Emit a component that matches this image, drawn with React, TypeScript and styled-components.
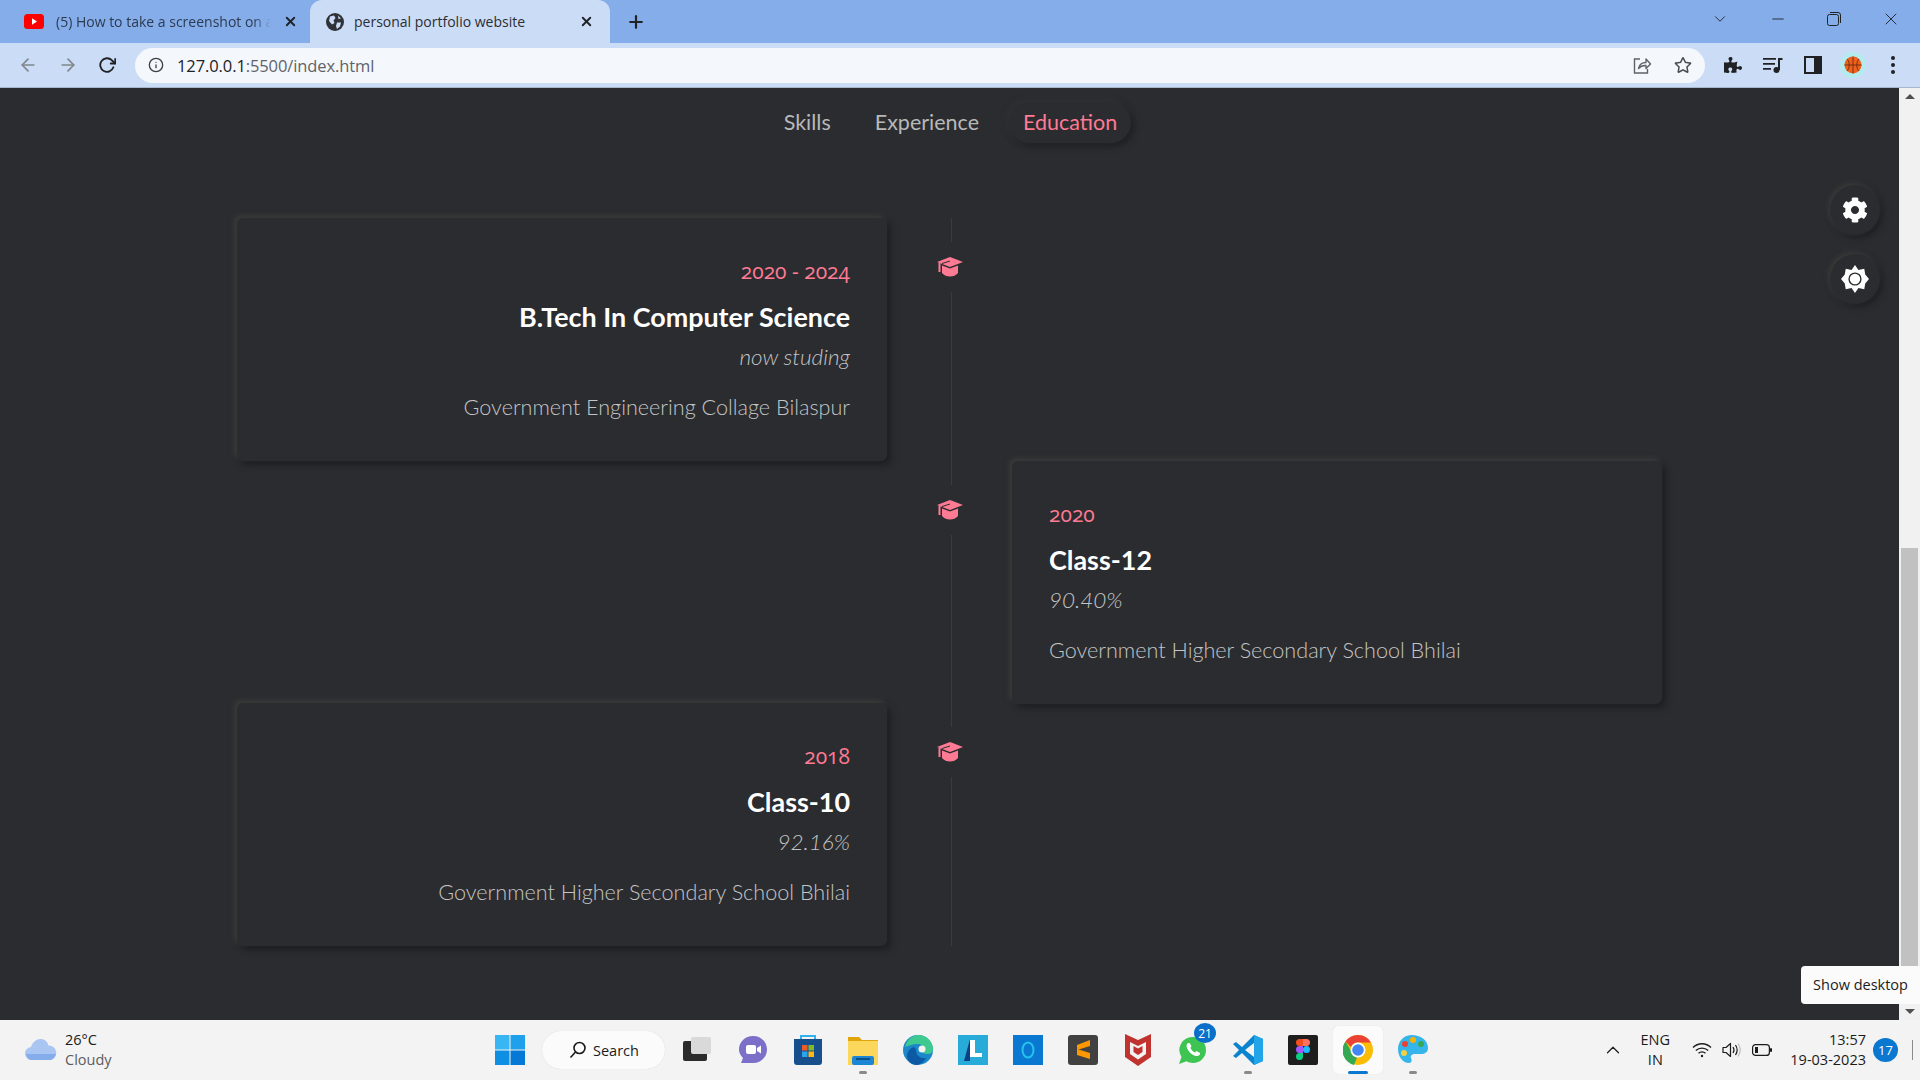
import styled, { createGlobalStyle } from 'styled-components';
import { FaCog, FaPuzzlePiece, FaRegStar } from 'react-icons/fa';
import { FiArrowLeft, FiArrowRight, FiChevronDown, FiChevronUp, FiInfo, FiMinus, FiX, FiPlus, FiRotateCw } from 'react-icons/fi';

const EDUCATION = [
  { date: '2020 - 2024', title: 'B.Tech In Computer Science', note: 'now studing', school: 'Government Engineering Collage Bilaspur', side: 'left' },
  { date: '2020', title: 'Class-12', note: '90.40%', school: 'Government Higher Secondary School Bhilai', side: 'right' },
  { date: '2018', title: 'Class-10', note: '92.16%', school: 'Government Higher Secondary School Bhilai', side: 'left' },
];

const GlobalStyle = createGlobalStyle`
  * { box-sizing: border-box; }
  html, body { margin: 0; padding: 0; overflow: hidden; }
  body { font-family: "Open Sans", "Noto Sans", sans-serif; }
`;

const YoutubeIcon = () => (
  <svg width="20" height="15" viewBox="0 0 20 15">
    <rect width="20" height="15" rx="3.5" fill="#f00" />
    <path d="M8 4.2 13 7.5 8 10.8z" fill="#fff" />
  </svg>
);

const GlobeIcon = () => (
  <svg width="18" height="18" viewBox="0 0 18 18">
    <circle cx="9" cy="9" r="9" fill="#2f3237" />
    <path d="M4 3.5 8 2.5 9.5 5 7.5 7.5 8.5 10 6 11.5 3 8zM11 9.5h4l-1 4-3 2.5-1-3zM12 2.5l3 3-2.5.5z" fill="#cbdcf6" />
  </svg>
);

const ShareIcon = () => (
  <svg width="20" height="20" viewBox="0 0 20 20" fill="none" stroke="#5f6368" strokeWidth="1.4">
    <path d="M8 4H2.5v14h13v-4" />
    <path d="M6.5 13.5c.8-4 3.6-6 7.5-6V4l4.5 5-4.5 4.5V10.500c-3-.2-5.500.6-7.500 3z" strokeLinejoin="round" />
  </svg>
);

const QueueIcon = () => (
  <svg width="20" height="16" viewBox="0 0 20 16" fill="#202124">
    <path d="M0 1h13v1.800H0zM0 6h12v1.800H0zM0 11h8v1.800H0z" />
    <path d="M15 1h4.500v2H17v10h-2z" />
    <circle cx="13.500" cy="13" r="3" />
  </svg>
);

const SidePanelIcon = () => (
  <svg width="18" height="18" viewBox="0 0 18 18">
    <rect width="18" height="18" fill="#202124" />
    <rect x="2" y="2" width="8" height="14" fill="#cbdcf6" />
  </svg>
);

const ProfileIcon = () => (
  <svg width="26" height="26" viewBox="0 0 26 26">
    <circle cx="13" cy="13" r="13" fill="#b3ecef" />
    <circle cx="13" cy="13" r="8.500" fill="#f0611c" />
    <path d="M13 4.500v17M4.500 13h17M7 7c3 3 3 9 0 12M19 7c-3 3-3 9 0 12" fill="none" stroke="#6b2a10" strokeWidth="0.9" />
  </svg>
);

const RestoreIcon = () => (
  <svg width="14" height="14" viewBox="0 0 14 14" fill="none" stroke="#1f2328" strokeWidth="1">
    <rect x="0.500" y="2.500" width="11" height="11" rx="2" />
    <path d="M3 .5h8a2.500 2.500 0 0 1 2.500 2.500v8" />
  </svg>
);

const CapIcon = () => (
  <svg width="26" height="20" viewBox="0 0 26 20">
    <path d="M13 0 26 5 13 10 0 5z" fill="#ff7a93" />
    <path d="M5 8.500 13 11.500 21 8.500V16c-2 2.500-5 3.500-8 3.500S7 18.500 5 16z" fill="#ff7a93" />
    <path d="M2.500 6v9" stroke="#ff7a93" strokeWidth="2" />
    <path d="M5 6.500 13 4" stroke="#2b2c30" strokeWidth="1" />
  </svg>
);

const SunIcon = () => (
  <svg width="28" height="28" viewBox="0 0 26 26">
    <path d="M13 0l3.200 4.600 5.400-1.200.9 5.500 3.500 4.100-3.500 4.100-.9 5.500-5.400-1.200L13 26l-3.200-4.600-5.400 1.200-.9-5.500L0 13l3.500-4.100.9-5.500 5.400 1.200z" fill="#fff" />
    <circle cx="13" cy="13" r="5.500" fill="none" stroke="#2b2c30" strokeWidth="1.300" />
  </svg>
);

const CloudIcon = () => (
  <svg width="32" height="22" viewBox="0 0 32 22">
    <path d="M7 21a6.500 6.500 0 0 1-1-13C7.500 3 11.500 0 15.500 0c4 0 7 2.500 8 6.500a7.200 7.200 0 0 1 1 14.500z" fill="#a9c6f2" />
    <path d="M1 15h30c-1 4-4 6-6.500 6H7c-3 0-5-2-6-6z" fill="#86adeb" />
  </svg>
);

const WindowsIcon = () => (
  <svg width="30" height="30" viewBox="0 0 30 30">
    <rect width="14.500" height="14.500" fill="#38b6f4" />
    <rect x="15.500" width="14.500" height="14.500" fill="#1fa0ea" />
    <rect y="15.500" width="14.500" height="14.500" fill="#0f8fe4" />
    <rect x="15.500" y="15.500" width="14.500" height="14.500" fill="#0679d6" />
  </svg>
);

const SearchGlyph = () => (
  <svg width="18" height="18" viewBox="0 0 18 18" fill="none" stroke="#1b1b1b" strokeWidth="1.600">
    <circle cx="10.500" cy="7" r="5.500" />
    <path d="M6.500 11 1.500 16.500" />
  </svg>
);

const TaskViewIcon = () => (
  <svg width="30" height="30" viewBox="0 0 30 30">
    <rect x="0" y="6" width="24" height="20" rx="2" fill="#2b2b2b" />
    <rect x="8" y="2" width="20" height="17" rx="2" fill="#d9d9d9" />
  </svg>
);

const TeamsIcon = () => (
  <svg width="30" height="30" viewBox="0 0 30 30">
    <path d="M15 1c8 0 14 6 14 13.500S23 28 15 28H3l2-5C2.500 20.500 1 17.500 1 14.500 1 7 7 1 15 1z" fill="#7b6fc9" />
    <rect x="8" y="10" width="10" height="9" rx="2" fill="#fff" />
    <path d="M19 13l4-2.500v8L19 16z" fill="#fff" />
  </svg>
);

const StoreIcon = () => (
  <svg width="30" height="32" viewBox="0 0 30 32">
    <path d="M8 6V2h14v4" fill="none" stroke="#34b2ee" strokeWidth="2" />
    <path d="M1 5h28v23a3 3 0 0 1-3 3H4a3 3 0 0 1-3-3z" fill="#164f8b" />
    <rect x="9" y="11" width="5.500" height="5.500" fill="#ef5a28" />
    <rect x="15.500" y="11" width="5.500" height="5.500" fill="#7fba2a" />
    <rect x="9" y="17.500" width="5.500" height="5.500" fill="#2aa4ee" />
    <rect x="15.500" y="17.500" width="5.500" height="5.500" fill="#fdb813" />
  </svg>
);

const FolderIcon = () => (
  <svg width="30" height="30" viewBox="0 0 30 30">
    <path d="M0 2h11l3 3h16v6H0z" fill="#e2a40b" />
    <rect y="6" width="30" height="24" fill="#fbd75b" />
    <rect x="4" y="21" width="22" height="9" rx="2" fill="#1c86d4" />
    <rect x="8" y="23" width="14" height="2" fill="#0b4f87" />
  </svg>
);

const EdgeIcon = () => (
  <svg width="30" height="30" viewBox="0 0 30 30">
    <circle cx="15" cy="15" r="15" fill="#1a88c9" />
    <path d="M2 12C4 4 10 0 15 0c8 0 15 6 15 14 0 3-2 5-6 5-3 0-5-1-5-3 2-2 1-7-4-7-6 0-10 2-13 3z" fill="#3ec98f" />
    <path d="M13 15c0 6 5 9 10 8-2 4-6 7-10 7-4 0-8-3-9-8 0-5 3-9 7-10 1 1 2 2 2 3z" fill="#0c59a4" />
    <circle cx="19" cy="14" r="3.500" fill="#f3f3f3" />
  </svg>
);

const LetterTile = () => (
  <svg width="30" height="30" viewBox="0 0 30 30">
    <rect width="30" height="30" fill="#29abd9" />
    <path d="M6 26 12 4v22z" fill="#0b3f86" />
    <rect x="12" y="5" width="5" height="17" fill="#fff" />
    <rect x="12" y="18" width="12" height="4" fill="#fff" />
  </svg>
);

const RingTile = () => (
  <svg width="30" height="30" viewBox="0 0 30 30">
    <rect width="30" height="30" fill="#0a78d1" />
    <ellipse cx="15" cy="15" rx="5.500" ry="7.500" fill="none" stroke="#24c3ee" strokeWidth="2" />
  </svg>
);

const SublimeIcon = () => (
  <svg width="30" height="30" viewBox="0 0 30 30">
    <rect width="30" height="30" rx="3" fill="#414141" />
    <path d="M22 5v6L9 15v-5zM9 14l13 4v6L9 20z" fill="#ff9800" />
  </svg>
);

const McafeeIcon = () => (
  <svg width="28" height="32" viewBox="0 0 28 32">
    <path d="M1 0l13 6 13-6v23l-13 9-13-9z" fill="#c1332e" />
    <path d="M6 8l8 4 8-4v12l-8 5.500L6 20z" fill="#f3f3f3" />
    <path d="M9.500 12l4.500 2.500L18.500 12v6l-4.500 3-4.500-3z" fill="#c1332e" />
  </svg>
);

const WhatsappIcon = () => (
  <svg width="30" height="30" viewBox="0 0 30 30">
    <path d="M15 2a13 13 0 0 1 0 26c-2.500 0-4.500-.6-6.500-1.700L1 29l2.500-7A13 13 0 0 1 15 2z" fill="#3ec453" />
    <path d="M10 8c-2 1.500-2 4 0 7 2.500 4 6 6 9 6 2 0 3.500-1.500 3-3l-3.500-2-1.500 1.500c-2-.8-3.500-2.500-4.500-4.500L13.500 11 11.500 8z" fill="#fff" />
  </svg>
);

const VscodeIcon = () => (
  <svg width="30" height="30" viewBox="0 0 30 30">
    <path d="M21 0l9 4v22l-9 4-12-12-6 5-3-2 6-6-6-6 3-2 6 5z" fill="#0a84cf" />
    <path d="M21 0l9 4v22l-9 4z" fill="#22a4e8" />
    <path d="M21 8 12 15l9 7z" fill="#f3f3f3" />
  </svg>
);

const FigmaIcon = () => (
  <svg width="30" height="30" viewBox="0 0 30 30">
    <rect width="30" height="30" rx="2" fill="#1e1e1e" />
    <path d="M15 4h-3.500a3.500 3.500 0 0 0 0 7H15z" fill="#f24e1e" />
    <path d="M15 4h3.500a3.500 3.500 0 0 1 0 7H15z" fill="#ff7262" />
    <path d="M15 11h-3.500a3.500 3.500 0 0 0 0 7H15z" fill="#a259ff" />
    <circle cx="18.500" cy="14.500" r="3.500" fill="#1abcfe" />
    <path d="M11.500 18H15v3.500a3.500 3.500 0 1 1-3.500-3.500z" fill="#0acf83" />
  </svg>
);

const ChromeIcon = () => (
  <svg width="30" height="32" viewBox="0 0 30 30">
    <circle cx="15" cy="15" r="15" fill="#fbbc05" />
    <path d="M15 0a15 15 0 0 1 13 7.500H15a7.500 7.500 0 0 0-7 4.500L2.500 6.500A15 15 0 0 1 15 0z" fill="#ea4335" />
    <path d="M2.500 6.500 8 16a7.500 7.500 0 0 0 6 6.500L11 30A15 15 0 0 1 2.500 6.500z" fill="#34a853" />
    <circle cx="15" cy="15" r="7.500" fill="#fff" />
    <circle cx="15" cy="15" r="5.800" fill="#4285f4" />
  </svg>
);

const PaintIcon = () => (
  <svg width="30" height="32" viewBox="0 0 30 32">
    <path d="M14 1C6 1 0 7 0 15s5 14 11 14c3 0 3-3 2-5s1-4 4-4h6c4 0 7-2 7-6C30 6 22 1 14 1z" fill="#36b5ea" />
    <circle cx="15" cy="6" r="3" fill="#f4b400" />
    <circle cx="7" cy="10" r="3" fill="#e94235" />
    <circle cx="23" cy="10" r="3" fill="#35a853" />
    <circle cx="6" cy="19" r="3" fill="#f4d03f" />
  </svg>
);

const WifiIcon = () => (
  <svg width="20" height="16" viewBox="0 0 20 16" fill="none" stroke="#1b1b1b" strokeWidth="1.300">
    <path d="M1 5.500c5-5 13-5 18 0M3.800 8.500c3.500-3.300 9-3.300 12.400 0M6.500 11.300c2-1.800 5-1.800 7 0" />
    <circle cx="10" cy="14" r="1.200" fill="#1b1b1b" stroke="none" />
  </svg>
);

const VolumeIcon = () => (
  <svg width="20" height="16" viewBox="0 0 20 16" fill="none" stroke="#1b1b1b" strokeWidth="1.200">
    <path d="M1 5.500h3L8.500 1.500v13L4 10.500H1z" strokeLinejoin="round" />
    <path d="M11 5c1.200 1.800 1.200 4.200 0 6M13.500 3c2 3 2 7 0 10" />
    <path d="M16 1.500c2.800 4 2.800 9 0 13" stroke="#bdbdbd" />
  </svg>
);

const BatteryIcon = () => (
  <svg width="20" height="12" viewBox="0 0 20 12">
    <rect x="0.600" y="0.600" width="16.800" height="10.800" rx="3" fill="none" stroke="#1b1b1b" strokeWidth="1.200" />
    <rect x="3" y="3" width="3" height="6" fill="#1b1b1b" />
    <rect x="18" y="4" width="2" height="4" rx="1" fill="#1b1b1b" />
  </svg>
);

const TASKBAR_APPS = [
  { id: 'taskview', icon: <TaskViewIcon /> },
  { id: 'teams', icon: <TeamsIcon /> },
  { id: 'store', icon: <StoreIcon /> },
  { id: 'folder', icon: <FolderIcon />, running: true },
  { id: 'edge', icon: <EdgeIcon /> },
  { id: 'letter', icon: <LetterTile /> },
  { id: 'ring', icon: <RingTile /> },
  { id: 'sublime', icon: <SublimeIcon /> },
  { id: 'mcafee', icon: <McafeeIcon /> },
  { id: 'whatsapp', icon: <WhatsappIcon />, badge: '21' },
  { id: 'vscode', icon: <VscodeIcon />, running: true },
  { id: 'figma', icon: <FigmaIcon /> },
  { id: 'chrome', icon: <ChromeIcon />, active: true },
  { id: 'paint', icon: <PaintIcon />, running: true },
];

export default function App() {
  return (
    <>
      <GlobalStyle />
      <Screen>
        <TabStrip>
          <Tab>
            <YoutubeIcon />
            <TabTitle $fade>(5) How to take a screenshot on a</TabTitle>
            <FiX size={15} strokeWidth={3} />
          </Tab>
          <ActiveTab>
            <GlobeIcon />
            <TabTitle>personal portfolio website</TabTitle>
            <FiX size={15} strokeWidth={3} />
          </ActiveTab>
          <NewTab><FiPlus size={20} strokeWidth={2.6} /></NewTab>
          <WindowControls>
            <FiChevronDown size={18} strokeWidth={1.2} />
            <FiMinus size={18} strokeWidth={1.2} />
            <RestoreIcon />
            <FiX size={20} strokeWidth={1.1} />
          </WindowControls>
        </TabStrip>
        <Toolbar>
          <NavButtons>
            <FiArrowLeft size={20} color="#80868b" />
            <FiArrowRight size={20} color="#80868b" />
            <FiRotateCw size={18} color="#202124" strokeWidth={2.4} />
          </NavButtons>
          <AddressBar>
            <FiInfo size={16} color="#3c4043" />
            <Url>127.0.0.1<UrlRest>:5500/index.html</UrlRest></Url>
            <AddressActions>
              <ShareIcon />
              <FaRegStar size={18} color="#4a4d52" />
            </AddressActions>
          </AddressBar>
          <ToolbarActions>
            <ActionSlot><FaPuzzlePiece size={18} color="#202124" /></ActionSlot>
            <ActionSlot><QueueIcon /></ActionSlot>
            <ActionSlot><SidePanelIcon /></ActionSlot>
            <ActionSlot><ProfileIcon /></ActionSlot>
            <ActionSlot><MenuDots><span /><span /><span /></MenuDots></ActionSlot>
          </ToolbarActions>
        </Toolbar>
        <Viewport>
          <Page>
            <TopNav>
              <NavItem>Skills</NavItem>
              <NavItem>Experience</NavItem>
              <NavItem $active>Education</NavItem>
            </TopNav>
            <Timeline>
              {EDUCATION.map((item) => (
                <TimelineRow key={item.title}>
                  {item.side === 'left' ? <EduCard item={item} /> : <div />}
                  <Rail>
                    <RailLine $fixed />
                    <RailIcon><CapIcon /></RailIcon>
                    <RailLine />
                  </Rail>
                  {item.side === 'right' ? <EduCard item={item} /> : <div />}
                </TimelineRow>
              ))}
            </Timeline>
            <FloatButton $top={97}><FaCog size={26} color="#fff" /></FloatButton>
            <FloatButton $top={166}><SunIcon /></FloatButton>
          </Page>
          <Scrollbar>
            <ScrollArrow $up />
            <ScrollTrack><ScrollThumb /></ScrollTrack>
            <ScrollArrow />
          </Scrollbar>
          <Tooltip>Show desktop</Tooltip>
        </Viewport>
        <Taskbar>
          <Weather>
            <CloudIcon />
            <WeatherText>
              <span>26°C</span>
              <WeatherSub>Cloudy</WeatherSub>
            </WeatherText>
          </Weather>
          <TaskbarCenter>
            <WindowsIcon />
            <SearchPill><SearchGlyph />Search</SearchPill>
            <AppList>
              {TASKBAR_APPS.map((app) => (
                <AppSlot key={app.id} $active={app.active}>
                  {app.icon}
                  {app.badge && <AppBadge>{app.badge}</AppBadge>}
                  {(app.running || app.active) && <AppDot $active={app.active} />}
                </AppSlot>
              ))}
            </AppList>
          </TaskbarCenter>
          <Tray>
            <FiChevronUp size={22} strokeWidth={1.3} color="#1b1b1b" />
            <Lang><span>ENG</span><span>IN</span></Lang>
            <TrayIcons>
              <WifiIcon />
              <VolumeIcon />
              <BatteryIcon />
            </TrayIcons>
            <Clock><span>13:57</span><span>19-03-2023</span></Clock>
            <NotifyBadge>17</NotifyBadge>
            <ShowDesktop />
          </Tray>
        </Taskbar>
      </Screen>
    </>
  );
}

const EduCard = ({ item }: { item: (typeof EDUCATION)[number] }) => (
  <Card $side={item.side}>
    <CardDate>{item.date}</CardDate>
    <CardTitle>{item.title}</CardTitle>
    <CardNote>{item.note}</CardNote>
    <CardSchool>{item.school}</CardSchool>
  </Card>
);

const Screen = styled.div`
  display: flex;
  flex-direction: column;
  width: 1920px;
  height: 1080px;
  overflow: hidden;
`;
const TabStrip = styled.div`
  display: flex;
  align-items: flex-end;
  height: 43px;
  padding-left: 24px;
  background: #85ade9;
  color: #1f2328;
  font-size: 14px;
`;
const Tab = styled.div`
  display: flex;
  align-items: center;
  gap: 12px;
  width: 286px;
  height: 43px;
  padding-right: 12px;
`;
const ActiveTab = styled(Tab)`
  width: 300px;
  gap: 10px;
  padding: 0 16px;
  background: #cbdcf6;
  border-radius: 12px 12px 0 0;
`;
const TabTitle = styled.span<{ $fade?: boolean }>`
  flex: 1;
  white-space: nowrap;
  overflow: hidden;
  color: ${(p) => (p.$fade ? '#2c3a50' : '#2b2e33')};
  ${(p) => p.$fade && 'mask-image: linear-gradient(to right, #000 92%, transparent);'}
`;
const NewTab = styled.div`
  display: flex;
  align-items: center;
  margin-left: 16px;
  height: 43px;
`;
const WindowControls = styled.div`
  display: flex;
  align-items: center;
  gap: 40px;
  margin-left: auto;
  height: 38px;
  padding-right: 19px;
  align-self: flex-start;
`;
const Toolbar = styled.div`
  display: flex;
  align-items: center;
  height: 45px;
  background: #cbdcf6;
  border-bottom: 1px solid #a9b7cc;
`;
const NavButtons = styled.div`
  display: flex;
  align-items: center;
  gap: 20px;
  width: 135px;
  padding-left: 18px;
`;
const AddressBar = styled.div`
  display: flex;
  align-items: center;
  gap: 13px;
  width: 1570px;
  height: 35px;
  padding: 0 13px 0 13px;
  background: #f4f7fc;
  border-radius: 18px;
`;
const Url = styled.span`
  color: #202124;
  font-size: 16.500px;
  letter-spacing: -0.1px;
`;
const UrlRest = styled.span`
  color: #5f6368;
`;
const AddressActions = styled.div`
  display: flex;
  align-items: center;
  gap: 22px;
  margin-left: auto;
`;
const ToolbarActions = styled.div`
  display: flex;
  align-items: center;
  padding-left: 8px;
`;
const ActionSlot = styled.div`
  display: flex;
  align-items: center;
  justify-content: center;
  width: 40px;
`;
const MenuDots = styled.div`
  display: flex;
  flex-direction: column;
  gap: 3px;
  span {
    width: 4px;
    height: 4px;
    border-radius: 50%;
    background: #202124;
  }
`;
const Viewport = styled.div`
  position: relative;
  display: flex;
  height: 932px;
`;
const Page = styled.div`
  position: relative;
  flex: 1;
  background: #2b2c30;
  font-family: Lato, "Open Sans", sans-serif;
`;
const TopNav = styled.nav`
  display: flex;
  justify-content: center;
  gap: 16px;
  padding: 14px 0 0 2px;
  margin-bottom: 75px;
`;
const NavItem = styled.a<{ $active?: boolean }>`
  height: 41px;
  padding: 0 14px;
  border-radius: 21px;
  font-size: 21.500px;
  line-height: 40px;
  color: ${(p) => (p.$active ? '#ff7a93' : '#b8b8b8')};
  ${(p) => p.$active && 'box-shadow: -2px -2px 6px #3a3a3680, 3px 3px 6px #1e1f22;'}
`;
const Timeline = styled.div`
  display: flex;
  flex-direction: column;
`;
const TimelineRow = styled.div`
  display: grid;
  grid-template-columns: 650px 125px 650px;
  justify-content: center;
  height: 242.5px;
`;
const Rail = styled.div`
  display: flex;
  flex-direction: column;
  align-items: center;
`;
const RailLine = styled.div<{ $fixed?: boolean }>`
  width: 1px;
  margin-left: 3px;
  background: #3a3b40;
  ${(p) => (p.$fixed ? 'height: 24px;' : 'flex: 1;')}
`;
const RailIcon = styled.div`
  display: flex;
  align-items: center;
  justify-content: center;
  height: 50px;
`;
const Card = styled.div<{ $side: string }>`
  height: 243px;
  padding: 39px 37px 40px 37px;
  border-radius: 6px;
  background: #2b2c30;
  text-align: ${(p) => (p.$side === 'left' ? 'right' : 'left')};
  box-shadow: -3px -3px 5px #3a3a38, 4px 4px 6px #1e1f22;
`;
const CardDate = styled.div`
  font-family: "Open Sans", sans-serif;
  font-size: 21px;
  font-weight: 500;
  line-height: 28px;
  color: #ff7a93;
  font-variant-numeric: oldstyle-nums;
`;
const CardTitle = styled.div`
  margin-top: 13px;
  font-size: 26.900px;
  font-weight: 700;
  line-height: 38px;
  color: #fff;
`;
const CardNote = styled.div`
  margin-top: 8px;
  font-size: 22.500px;
  font-style: italic;
  font-weight: 300;
  line-height: 26px;
  color: #c4c4c4;
`;
const CardSchool = styled.div`
  margin-top: 24px;
  font-size: 21.600px;
  font-weight: 300;
  line-height: 26px;
  color: #c4c4c4;
`;
const FloatButton = styled.button<{ $top: number }>`
  position: absolute;
  top: ${(p) => p.$top}px;
  right: 19px;
  display: flex;
  align-items: center;
  justify-content: center;
  width: 50px;
  height: 50px;
  padding: 0;
  border: none;
  border-radius: 50%;
  background: #2b2c30;
  box-shadow: -2px -2px 5px #3a3a38, 3px 3px 6px #1e1f22;
`;
const Scrollbar = styled.div`
  display: flex;
  flex-direction: column;
  width: 21px;
  background: #f1f1f1;
`;
const ScrollArrow = styled.div<{ $up?: boolean }>`
  display: flex;
  align-items: center;
  justify-content: center;
  height: 17px;
  &::before {
    content: '';
    border-left: 5px solid transparent;
    border-right: 5px solid transparent;
    ${(p) => (p.$up ? 'border-bottom: 5px solid #505050;' : 'border-top: 5px solid #505050;')}
  }
`;
const ScrollTrack = styled.div`
  display: flex;
  flex-direction: column;
  justify-content: flex-end;
  flex: 1;
`;
const ScrollThumb = styled.div`
  height: 455px;
  margin: 0 2px;
  background: #c1c1c1;
`;
const Tooltip = styled.div`
  position: absolute;
  right: 0;
  bottom: 16px;
  width: 119px;
  height: 38px;
  border-radius: 4px 0 0 4px;
  background: #fbfbfb;
  color: #1b1b1b;
  font-size: 14.500px;
  line-height: 38px;
  text-align: center;
`;
const Taskbar = styled.footer`
  position: relative;
  display: flex;
  align-items: center;
  flex: 1;
  background: #f3f3f3;
  color: #1b1b1b;
  font-size: 14.500px;
`;
const Weather = styled.div`
  display: flex;
  align-items: center;
  gap: 8px;
  width: 495px;
  padding-left: 25px;
`;
const WeatherText = styled.div`
  display: flex;
  flex-direction: column;
  line-height: 20px;
`;
const WeatherSub = styled.span`
  color: #5c5c5c;
`;
const TaskbarCenter = styled.div`
  display: flex;
  align-items: center;
  gap: 17px;
`;
const SearchPill = styled.div`
  display: flex;
  align-items: center;
  gap: 6px;
  width: 123px;
  height: 38px;
  padding-left: 27px;
  border-radius: 19px;
  background: #fbfbfb;
  box-shadow: 0 0 1px #d0d0d0;
`;
const AppList = styled.div`
  display: flex;
  gap: 5px;
  margin-left: -9px;
`;
const AppSlot = styled.div<{ $active?: boolean }>`
  position: relative;
  display: flex;
  align-items: center;
  justify-content: center;
  width: 50px;
  height: 48px;
  border-radius: 5px;
  ${(p) => p.$active && 'background: #fbfbfb; box-shadow: 0 0 1px #d0d0d0;'}
`;
const AppBadge = styled.span`
  position: absolute;
  top: -3px;
  right: 2px;
  display: flex;
  align-items: center;
  justify-content: center;
  width: 22px;
  height: 20px;
  border-radius: 50%;
  background: #0a6fc9;
  color: #fff;
  font-size: 12px;
`;
const AppDot = styled.span<{ $active?: boolean }>`
  position: absolute;
  bottom: 0;
  width: ${(p) => (p.$active ? '20px' : '8px')};
  height: 3.500px;
  border-radius: 2px;
  background: ${(p) => (p.$active ? '#0a78d1' : '#8a8a8a')};
`;
const Tray = styled.div`
  display: flex;
  align-items: center;
  margin-left: auto;
  padding-right: 7px;
`;
const Lang = styled.div`
  display: flex;
  flex-direction: column;
  align-items: center;
  width: 40px;
  margin: 0 17px 0 11px;
  line-height: 20px;
`;
const TrayIcons = styled.div`
  display: flex;
  align-items: center;
  gap: 10px;
`;
const Clock = styled.div`
  display: flex;
  flex-direction: column;
  align-items: flex-end;
  margin-left: 18px;
  line-height: 20px;
`;
const NotifyBadge = styled.span`
  display: flex;
  align-items: center;
  justify-content: center;
  width: 25px;
  height: 24px;
  margin-left: 7px;
  border-radius: 50%;
  background: #0a78d1;
  color: #fff;
  font-size: 13px;
`;
const ShowDesktop = styled.span`
  width: 1px;
  height: 20px;
  margin-left: 14px;
  background: #8a8a8a;
`;
